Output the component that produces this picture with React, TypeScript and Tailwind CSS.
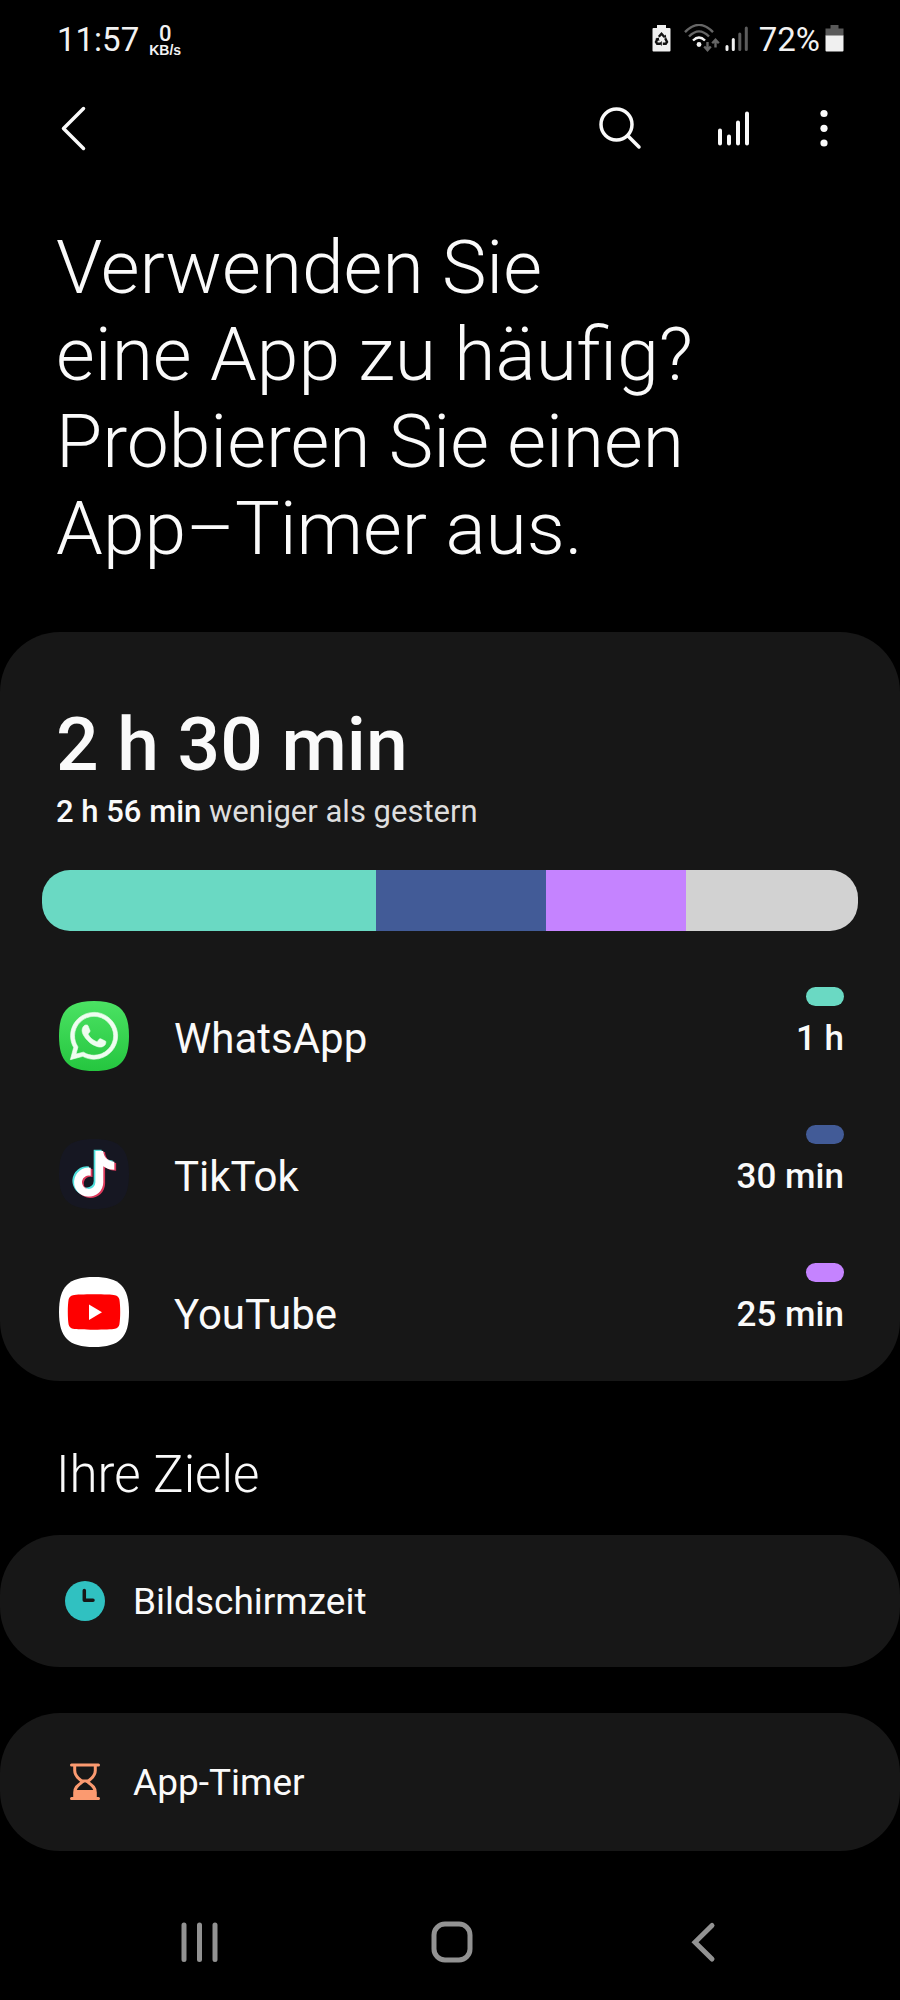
import type { ReactNode } from 'react';
import { FaTiktok, FaWhatsapp } from 'react-icons/fa6';

const SQUIRCLE = 'M35 0C60.5 0 70 9.5 70 35S60.5 70 35 70 0 60.5 0 35 9.5 0 35 0Z';

function WhatsAppIcon() {
  return (
    <svg viewBox="0 0 70 70" className="size-[70px]" aria-hidden="true">
      <defs>
        <linearGradient id="wa" x1="0" y1="0" x2="0" y2="1">
          <stop offset="0" stopColor="#4be263" />
          <stop offset="1" stopColor="#25c63f" />
        </linearGradient>
      </defs>
      <path d={SQUIRCLE} fill="url(#wa)" />
      <FaWhatsapp x="8" y="8" size={54} color="#effdf0" stroke="#effdf0" strokeWidth="6" />
    </svg>
  );
}

function TikTokIcon() {
  return (
    <svg viewBox="0 0 70 70" className="size-[70px]" aria-hidden="true">
      <path d={SQUIRCLE} fill="#161722" />
      <FaTiktok x="10.5" y="10.5" size={46} color="#4fdfdc" />
      <FaTiktok x="14" y="13" size={46} color="#dc3a5c" />
      <FaTiktok x="12.2" y="11.800" size={46} color="#ffffff" />
    </svg>
  );
}

function YouTubeIcon() {
  return (
    <svg viewBox="0 0 70 70" className="size-[70px]" aria-hidden="true">
      <path d={SQUIRCLE} fill="#ffffff" />
      <path
        d="M35 17.3c10 0 18 .3 21 .9 2.300 .5 3.900 2 4.400 4.300 .5 2.800 .8 7.500 .8 12.500s-.3 9.700-.8 12.500c-.5 2.300-2.100 3.800-4.400 4.300-3 .6-11 .9-21 .9s-18-.3-21-.9c-2.300-.5-3.900-2-4.400-4.300-.5-2.800-.8-7.500-.8-12.500s.3-9.700 .8-12.500c.5-2.300 2.100-3.800 4.400-4.300 3-.6 11-.9 21-.9Z"
        fill="#fe0000"
      />
      <path d="M30 27.500v15.500l13-7.750Z" fill="#ffffff" />
    </svg>
  );
}

const usage = [
  { name: 'WhatsApp', time: '1 h', color: 'bg-[#6ad9c3]', icon: <WhatsAppIcon /> },
  { name: 'TikTok', time: '30 min', color: 'bg-[#425b97]', icon: <TikTokIcon /> },
  { name: 'YouTube', time: '25 min', color: 'bg-[#c583ff]', icon: <YouTubeIcon /> },
];

const segments = [
  { color: 'bg-[#6ad9c3]', minutes: 334 },
  { color: 'bg-[#425b97]', minutes: 169 },
  { color: 'bg-[#c583ff]', minutes: 140 },
  { color: 'bg-[#d2d2d2]', minutes: 172 },
];

function StatusBar() {
  return (
    <div className="flex h-20 items-center pr-14 pl-[57px] text-[#f2f2f2]">
      <span className="text-[33px] leading-10">11:57</span>
      <span className="ml-[10px] flex flex-col items-center">
        <span className="text-[22px] leading-5 font-medium">0</span>
        <span className="font-['Liberation_Sans',sans-serif] text-[14px] leading-3 font-bold">KB/s</span>
      </span>
      <svg viewBox="0 0 19 27" className="mt-[-4px] ml-auto h-[27px] w-[19px]" aria-hidden="true">
        <path d="M5 0h9v3h3.500q1 0 1 1v21.500q0 1-1 1h-16q-1 0-1-1V4q0-1 1-1H5Z" fill="#f0f0f0" />
        <g fill="none" stroke="#111" strokeWidth="2.400">
          <path d="M6.800 11.800 9.500 8.800l2.700 3" />
          <path d="M13.200 13.200 15 17l-1.200 1.800h-3" />
          <path d="M8.300 18.800H5.200L4 17l1.800-3.800" />
        </g>
        <path d="M3 14l3.800-1.400.6 3.400Z M9.800 16v5l-2.600-2.500Z M11 12.500l3.300 .3-.6-3.200Z" fill="#111" />
      </svg>
      <svg viewBox="0 0 36 28" className="mt-[-4px] ml-[13px] h-7 w-9" fill="none" aria-hidden="true">
        <path d="M1 8.200Q15-6.400 29 8.200" stroke="#666" strokeWidth="2.400" />
        <path d="M5 12.500Q15 2.200 25 12.500" stroke="#666" strokeWidth="2.400" />
        <path d="M9 16.500Q15 10.500 21 16.500" stroke="#f2f2f2" strokeWidth="2.400" />
        <circle cx="15" cy="20.500" r="2.400" fill="#f2f2f2" />
        <path d="M23.500 18v7.500M20.200 22.500l3.300 3.600 3.300-3.600M31.500 23.500v-7.500M28.200 19.300l3.300-3.600 3.300 3.600" stroke="#666" strokeWidth="2.400" />
      </svg>
      <svg viewBox="0 0 24 26" className="mt-[-3px] ml-[5px] h-[26px] w-6" strokeWidth="3" strokeLinecap="round" aria-hidden="true">
        <path d="M2 20.500v3M8.300 13.500v10" stroke="#f2f2f2" />
        <path d="M14.800 8v15.500M21.300 2v21.500" stroke="#5c5c5c" />
      </svg>
      <span className="ml-[10px] text-[33px] leading-10">72%</span>
      <svg viewBox="0 0 19 27" className="mt-[-4px] ml-[5px] h-[27px] w-[19px]" aria-hidden="true">
        <path d="M5.500 0h8v3.500h5V11H.5V3.500h5Z" fill="#595959" />
        <path d="M.5 10.500h18v15q0 1-1 1h-16q-1 0-1-1Z" fill="#f0f0f0" />
      </svg>
    </div>
  );
}

function Toolbar() {
  return (
    <header className="flex h-24 items-center pr-11 pl-[42px]">
      <button type="button" aria-label="Zurück" className="flex size-16 items-center justify-center">
        <svg viewBox="0 0 64 64" className="size-16" fill="none" stroke="#fafafa" strokeWidth="3.500" strokeLinecap="round" strokeLinejoin="round">
          <path d="M41.500 12.500 21.500 32.500l20 20" />
        </svg>
      </button>
      <button type="button" aria-label="Suchen" className="mr-[50px] ml-auto flex size-16 items-center justify-center">
        <svg viewBox="0 0 64 64" className="size-16" fill="none" stroke="#fafafa" strokeWidth="3.500" strokeLinecap="round">
          <circle cx="28.500" cy="28.500" r="15.500" />
          <path d="M40 40 51 51" />
        </svg>
      </button>
      <button type="button" aria-label="Statistik" className="mr-[26px] flex size-16 items-center justify-center">
        <svg viewBox="0 0 64 64" className="size-16" fill="none" stroke="#fafafa" strokeWidth="4" strokeLinecap="round">
          <path d="M18 34.500v13M27 40.500v7M36 26.500v21M45 17.500v30" />
        </svg>
      </button>
      <button type="button" aria-label="Weitere Optionen" className="flex size-16 items-center justify-center">
        <svg viewBox="0 0 64 64" className="size-16" fill="#fafafa">
          <circle cx="32" cy="17.500" r="3.600" />
          <circle cx="32" cy="32.300" r="3.600" />
          <circle cx="32" cy="47" r="3.600" />
        </svg>
      </button>
    </header>
  );
}

function Goal({ label, icon, height }: { label: string; icon: ReactNode; height: string }) {
  return (
    <button
      type="button"
      className={`${height} flex w-full items-center rounded-[60px] bg-[#171717] pl-[61px] text-left text-[37px] leading-[44px]`}
    >
      {icon}
      <span className="ml-6 pt-0.5">{label}</span>
    </button>
  );
}

export default function App() {
  return (
    <div className="flex min-h-screen flex-col bg-black font-[Roboto,sans-serif] text-[#fafafa]">
      <StatusBar />
      <Toolbar />
      <main>
        <h1 className="px-14 pt-12 text-[75px] leading-[87px] font-light">
          Verwenden Sie
          <br />
          eine App zu häufig?
          <br />
          Probieren Sie einen
          <br />
          App–Timer aus.
        </h1>

        <section className="mt-[60px] rounded-[60px] bg-[#171717] pt-[68px]">
          <h2 className="px-14 text-[75px] leading-[88px] font-medium">2 h 30 min</h2>
          <p className="mt-1 px-14 text-[31px] leading-10 text-[#dedede]">
            <span className="font-medium text-[#fafafa]">2 h 56 min</span> weniger als gestern
          </p>
          <div className="mx-[42px] mt-[38px] flex h-[61px] overflow-hidden rounded-[28px]">
            {segments.map((s) => (
              <div key={s.color} className={s.color} style={{ flex: s.minutes }} />
            ))}
          </div>
          <ul className="mt-9">
            {usage.map((u) => (
              <li key={u.name} className="flex h-[138px] items-start pt-5 pr-14 pl-[59px]">
                <span className="mt-[14px]">{u.icon}</span>
                <span className="mt-7 ml-[45px] text-[42px] leading-[48px]">{u.name}</span>
                <span className="ml-auto flex flex-col items-end gap-[13px]">
                  <span className={`${u.color} h-[19px] w-[38px] rounded-full`} />
                  <span className="text-[35px] leading-10 font-medium">{u.time}</span>
                </span>
              </li>
            ))}
          </ul>
        </section>

        <section>
          <h2 className="mt-16 px-14 text-[51px] leading-[60px] font-light">Ihre Ziele</h2>
          <div className="mt-[30px] flex flex-col gap-[46px]">
            <Goal
              label="Bildschirmzeit"
              height="h-[132px]"
              icon={
                <svg viewBox="0 0 48 48" className="size-12" aria-hidden="true">
                  <circle cx="24" cy="24" r="20" fill="#30c1c1" />
                  <path d="M23.300 13.500v9.700h8.700" fill="none" stroke="#171717" strokeWidth="3.500" strokeLinecap="round" strokeLinejoin="round" />
                </svg>
              }
            />
            <Goal
              label="App-Timer"
              height="h-[138px]"
              icon={
                <svg viewBox="0 0 48 48" className="size-12" fill="none" stroke="#fb9a70" strokeWidth="3" aria-hidden="true">
                  <path d="M10.500 7h27M10.500 40.500h27" strokeLinecap="round" />
                  <path d="M13.700 7v5.500c0 5 3 7.500 6.300 10 1 .8 1 1.700 0 2.500-3.300 2.500-6.300 4.500-6.300 9.500V40h20.600v-5.500c0-5-3-7-6.300-9.500-1-.8-1-1.700 0-2.500 3.300-2.500 6.300-5 6.300-10V7" />
                  <path d="M15 32h18v8H15Z" fill="#fb9a70" stroke="none" />
                  <path d="M20.500 21.500h7v4.300L24 24.200l-3.500 1.600Z" fill="#fb9a70" stroke="none" />
                </svg>
              }
            />
          </div>
        </section>
      </main>

      <nav className="mt-[33px] flex h-[115px] items-center pr-[72px] pl-[76px]">
        <button type="button" aria-label="Letzte Apps" className="flex flex-1 justify-center">
          <svg viewBox="0 0 48 48" className="size-12" stroke="#929292" strokeWidth="5" strokeLinecap="round">
            <path d="M7 7v34.500M22.500 7v34.500M38 7v34.500" />
          </svg>
        </button>
        <button type="button" aria-label="Startseite" className="flex flex-1 justify-center">
          <svg viewBox="0 0 48 48" className="size-12" fill="none" stroke="#929292" strokeWidth="5">
            <rect x="6" y="6" width="36" height="36" rx="11" />
          </svg>
        </button>
        <button type="button" aria-label="Zurück" className="flex flex-1 justify-center">
          <svg viewBox="0 0 48 48" className="size-12" fill="none" stroke="#929292" strokeWidth="5" strokeLinecap="round">
            <path d="M33 7.500 16 24.200 33 41" />
          </svg>
        </button>
      </nav>
    </div>
  );
}
